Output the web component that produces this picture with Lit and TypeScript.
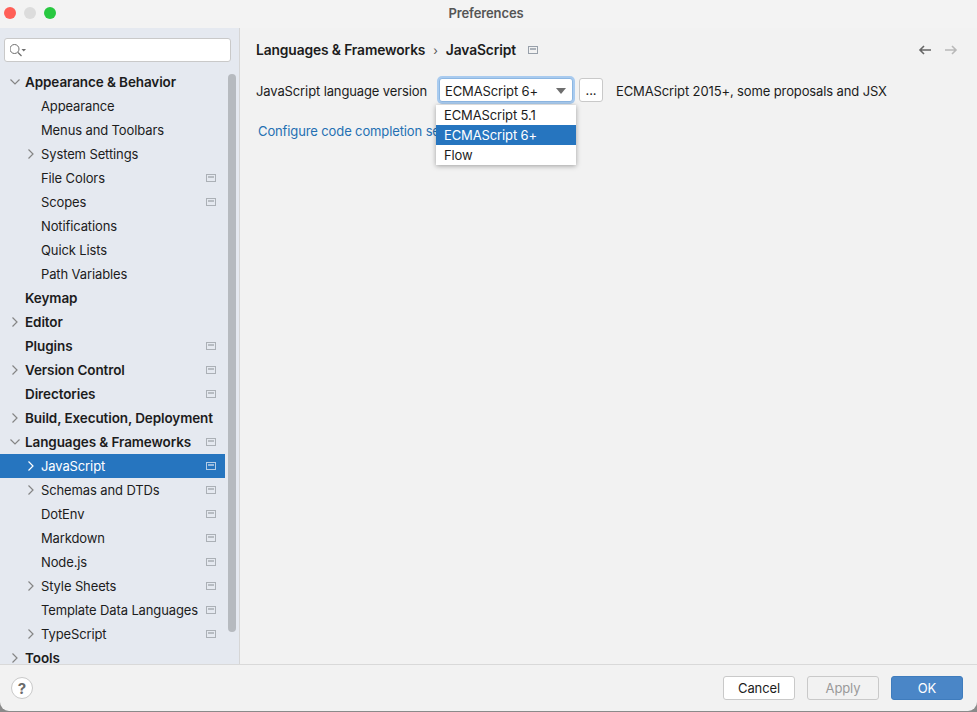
import { LitElement, html, css, svg } from "lit";
import { customElement } from "lit/decorators.js";

type Row = { label: string; level: 0 | 1; arrow?: "right" | "down"; badge?: boolean; selected?: boolean };

const rows: Row[] = [
    { label: "Appearance & Behavior", level: 0, arrow: "down" },
    { label: "Appearance", level: 1 },
    { label: "Menus and Toolbars", level: 1 },
    { label: "System Settings", level: 1, arrow: "right" },
    { label: "File Colors", level: 1, badge: true },
    { label: "Scopes", level: 1, badge: true },
    { label: "Notifications", level: 1 },
    { label: "Quick Lists", level: 1 },
    { label: "Path Variables", level: 1 },
    { label: "Keymap", level: 0 },
    { label: "Editor", level: 0, arrow: "right" },
    { label: "Plugins", level: 0, badge: true },
    { label: "Version Control", level: 0, arrow: "right", badge: true },
    { label: "Directories", level: 0, badge: true },
    { label: "Build, Execution, Deployment", level: 0, arrow: "right" },
    { label: "Languages & Frameworks", level: 0, arrow: "down", badge: true },
    { label: "JavaScript", level: 1, arrow: "right", badge: true, selected: true },
    { label: "Schemas and DTDs", level: 1, arrow: "right", badge: true },
    { label: "DotEnv", level: 1, badge: true },
    { label: "Markdown", level: 1, badge: true },
    { label: "Node.js", level: 1, badge: true },
    { label: "Style Sheets", level: 1, arrow: "right", badge: true },
    { label: "Template Data Languages", level: 1, badge: true },
    { label: "TypeScript", level: 1, arrow: "right", badge: true },
    { label: "Tools", level: 0, arrow: "right" },
];

const chevron = (dir: "right" | "down") => html`<svg class="chev" width="12" height="12" viewBox="0 0 12 12">
    ${dir === "right"
        ? svg`<path d="M3.5 1.5 L8 6 L3.5 10.5" fill="none" stroke="currentColor" stroke-width="1.2"/>`
        : svg`<path d="M1.5 3.5 L6 8 L10.5 3.5" fill="none" stroke="currentColor" stroke-width="1.2"/>`}
</svg>`;

// small "project level" marker shown next to settings pages
const badge = html`<svg class="badge" width="10" height="8" viewBox="0 0 10 8">
    <rect x="0.5" y="0.5" width="9" height="7" fill="none" stroke="currentColor"/>
    <rect x="2" y="2" width="6" height="2" fill="currentColor" opacity="0.8"/>
</svg>`;

@customElement("app-root")
export class AppRoot extends LitElement {
    static styles = css`
        :host {
            display: block;
            width: 977px;
            height: 712px;
            font-family: Inter, "Liberation Sans", sans-serif;
            font-size: 13px;
            letter-spacing: -0.12px;
            color: #1c1c1c;
            background: #8a8a8a;
        }
        .window {
            height: 711px;
            display: flex;
            flex-direction: column;
            background: #f2f2f2;
            border-radius: 0 0 9px 9px;
            overflow: hidden;
        }
        .titlebar {
            height: 26px;
            padding-bottom: 2px;
            flex: none;
            display: flex;
            align-items: center;
            justify-content: center;
            position: relative;
            background: #f3f3f3;
            color: #555;
            font-weight: 600;
            padding-right: 5px;
        }
        .lights {
            position: absolute;
            left: 4px;
            top: 7px;
            display: flex;
            gap: 8px;
        }
        .lights i {
            width: 12px;
            height: 12px;
            border-radius: 50%;
        }
        .body {
            flex: 1;
            display: flex;
            min-height: 0;
        }
        .sidebar {
            width: 239px;
            flex: none;
            background: #e5e9f0;
            border-right: 1px solid #d6d6d6;
            display: flex;
            flex-direction: column;
            position: relative;
            overflow: hidden;
        }
        .search {
            margin: 10px 0 8px 4px;
            width: 227px;
            height: 24px;
            flex: none;
            box-sizing: border-box;
            background: #fff;
            border: 1px solid #c9c9c9;
            border-radius: 3px;
            display: flex;
            align-items: center;
            padding-left: 5px;
            color: #6e6e6e;
        }
        .tree {
            width: 225px;
        }
        .row {
            height: 24px;
            box-sizing: border-box;
            padding-bottom: 1px;
            display: flex;
            align-items: center;
            position: relative;
            white-space: nowrap;
        }
        .row.l0 {
            padding-left: 25px;
            font-size: 13.5px;
            letter-spacing: -0.1px;
            font-weight: 600;
        }
        .row.l1 {
            padding-left: 41px;
        }
        .row .chev {
            position: absolute;
            top: 6px;
            color: #858585;
        }
        .row.l0 .chev {
            left: 9px;
        }
        .row.l1 .chev {
            left: 25px;
        }
        .row .badge {
            position: absolute;
            left: 206px;
            top: 8px;
            color: #abb0b6;
        }
        .row.selected {
            background: #2675bf;
            color: #fff;
        }
        .row.selected .chev {
            color: #fff;
        }
        .row.selected .badge {
            color: #b4cde6;
        }
        .scrollbar {
            position: absolute;
            left: 228px;
            top: 46px;
            width: 8px;
            height: 558px;
            border-radius: 4px;
            background: #b6babf;
        }
        .content {
            flex: 1;
            min-width: 0;
            padding: 0 16px;
            position: relative;
        }
        .crumbs {
            height: 44px;
            display: flex;
            align-items: center;
            font-size: 13.8px;
            letter-spacing: -0.12px;
            font-weight: 600;
        }
        .crumbs .sep {
            margin: 0 8px;
            font-weight: 400;
            font-size: 12px;
            color: #555;
        }
        .crumbs .badge {
            margin-left: 12px;
            color: #98a0aa;
        }
        .nav {
            margin-left: auto;
            display: flex;
            gap: 12px;
            margin-right: 3px;
        }
        .version {
            height: 24px;
            margin-top: 6px;
            display: flex;
            align-items: center;
        }
        .version label {
            width: 183px;
            flex: none;
            padding-top: 1px;
        }
        .combo {
            width: 134px;
            height: 24px;
            box-sizing: border-box;
            background: #fff;
            border: 1px solid #8db7e2;
            box-shadow: 0 0 0 2px #a9cbef;
            border-radius: 3px;
            display: flex;
            align-items: center;
            justify-content: space-between;
            padding: 1px 6px 0 5px;
        }
        .combo b {
            width: 0;
            height: 0;
            border-left: 5px solid transparent;
            border-right: 5px solid transparent;
            border-top: 6px solid #6e6e6e;
        }
        .dots {
            margin-left: 6px;
            width: 24px;
            height: 24px;
            box-sizing: border-box;
            background: #fff;
            border: 1px solid #c9c9c9;
            border-radius: 3px;
            display: flex;
            align-items: center;
            justify-content: center;
        }
        .hint {
            margin-left: 13px;
            padding-top: 1px;
        }
        .link {
            margin: 17px 0 0 2px;
            height: 24px;
            line-height: 24px;
            color: #2470b3;
            white-space: nowrap;
        }
        .popup {
            position: absolute;
            left: 196px;
            top: 77px;
            width: 140px;
            background: #fff;
            box-shadow: 0 1px 5px rgba(0, 0, 0, 0.35);
        }
        .popup div {
            height: 20px;
            line-height: 20px;
            padding-left: 8px;
        }
        .popup .on {
            background: #2675bf;
            color: #fff;
        }
        .footer {
            height: 47px;
            flex: none;
            box-sizing: border-box;
            border-top: 1px solid #d9d9d9;
            display: flex;
            align-items: center;
            padding: 0 14px 0 11px;
            gap: 12px;
        }
        .help {
            width: 22px;
            height: 22px;
            box-sizing: border-box;
            border-radius: 50%;
            background: #fff;
            border: 1px solid #c9c9c9;
            display: flex;
            align-items: center;
            justify-content: center;
            font-weight: 700;
            font-size: 15px;
            color: #6a6a6a;
            margin-right: auto;
        }
        .btn {
            width: 72px;
            height: 24px;
            box-sizing: border-box;
            border: 1px solid #c9c9c9;
            border-radius: 3px;
            background: #fff;
            display: flex;
            align-items: center;
            justify-content: center;
        }
        .btn.off {
            background: #f2f2f2;
            color: #9a9a9a;
        }
        .btn.ok {
            background: #4a86c7;
            border-color: #3f7cbd;
            color: #fff;
        }
    `;

    render() {
        return html`
            <div class="window">
                <div class="titlebar">
                    <div class="lights">
                        <i style="background:#ff5f57"></i>
                        <i style="background:#dcdcdc"></i>
                        <i style="background:#28c840"></i>
                    </div>
                    Preferences
                </div>
                <div class="body">
                    <div class="sidebar">
                        <div class="search">
                            <svg width="18" height="14" viewBox="0 0 18 14">
                                <circle cx="4.5" cy="6" r="4.5" fill="none" stroke="currentColor" />
                                <path d="M8 9.5 L11.5 13" stroke="currentColor" stroke-width="1.2" />
                                <path d="M11.5 6 H16 L13.75 8.5 Z" fill="currentColor" />
                            </svg>
                        </div>
                        <div class="tree">
                            ${rows.map(
                                (r) => html`<div class="row l${r.level} ${r.selected ? "selected" : ""}">
                                    ${r.arrow ? chevron(r.arrow) : ""} ${r.label} ${r.badge ? badge : ""}
                                </div>`
                            )}
                        </div>
                        <div class="scrollbar"></div>
                    </div>
                    <div class="content">
                        <div class="crumbs">
                            Languages &amp; Frameworks
                            <span class="sep">›</span>
                            JavaScript
                            ${badge}
                            <div class="nav">
                                <svg width="14" height="12" viewBox="0 0 14 12">
                                    <path d="M13 6 H2 M6 2 L2 6 L6 10" fill="none" stroke="#666" stroke-width="1.6" />
                                </svg>
                                <svg width="14" height="12" viewBox="0 0 14 12">
                                    <path d="M1 6 H12 M8 2 L12 6 L8 10" fill="none" stroke="#b9b9b9" stroke-width="1.6" />
                                </svg>
                            </div>
                        </div>
                        <div class="version">
                            <label>JavaScript language version</label>
                            <div class="combo">ECMAScript 6+<b></b></div>
                            <div class="dots">...</div>
                            <span class="hint">ECMAScript 2015+, some proposals and JSX</span>
                        </div>
                        <div class="link">Configure code completion settings</div>
                        <div class="popup">
                            <div>ECMAScript 5.1</div>
                            <div class="on">ECMAScript 6+</div>
                            <div>Flow</div>
                        </div>
                    </div>
                </div>
                <div class="footer">
                    <div class="help">?</div>
                    <div class="btn">Cancel</div>
                    <div class="btn off">Apply</div>
                    <div class="btn ok">OK</div>
                </div>
            </div>
        `;
    }
}
